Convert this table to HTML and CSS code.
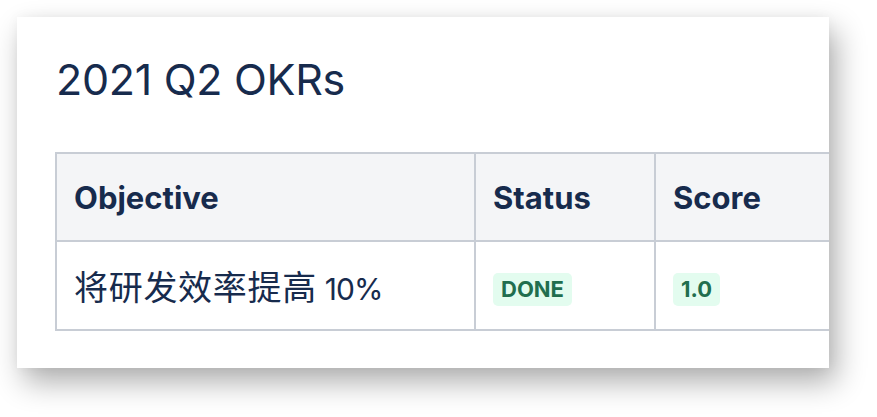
FILE: index.html
```html
<!DOCTYPE html>
<html lang="zh-CN">
<head>
<meta charset="utf-8">
<link rel="stylesheet" href="styles.css">
</head>
<body>
<div class="card">
  <h1 class="title">2021 Q2 OKRs</h1>
  <table class="okr">
    <colgroup>
      <col class="c1"><col class="c2"><col class="c3">
    </colgroup>
    <thead>
      <tr><th>Objective</th><th>Status</th><th>Score</th></tr>
    </thead>
    <tbody>
      <tr>
        <td><span class="cjk">将研发效率提高</span> <span class="num">10%</span></td>
        <td><span class="lozenge">DONE</span></td>
        <td><span class="lozenge">1.0</span></td>
      </tr>
    </tbody>
  </table>
</div>
</body>
</html>
```

FILE: styles.css
```css
html, body {
  margin: 0;
  padding: 0;
  background: #ffffff;
}
body {
  width: 877px;
  height: 417px;
  overflow: hidden;
  padding: 17px 0 0 17px;
  box-sizing: border-box;
  font-family: Inter, "Noto Sans CJK SC", sans-serif;
  color: #172b4d;
}
.card {
  width: 812px;
  height: 351px;
  background: #fff;
  overflow: hidden;
  box-sizing: border-box;
  padding: 0 0 0 38px;
  box-shadow: 7px 14px 28px rgba(0, 0, 0, 0.32), 0 0 12px rgba(0, 0, 0, 0.04);
}
.title {
  margin: 0 0 0 1px;
  padding-top: 42px;
  height: 88px;
  box-sizing: border-box;
  font-size: 43px;
  font-weight: 400;
  line-height: 40px;
  letter-spacing: -0.3px;
}
.okr {
  border-collapse: collapse;
  table-layout: fixed;
  width: 800px;
  margin-top: 47px;
}
.c1 { width: 419px; }
.c2 { width: 180px; }
.c3 { width: 201px; }
.okr th, .okr td {
  border: 2px solid #c8cdd5;
  text-align: left;
  padding: 0 0 0 17px;
  vertical-align: middle;
}
.okr th {
  background: #f4f5f7;
  height: 86px;
  font-size: 31px;
  font-weight: 700;
}
.okr td {
  height: 87px;
  font-size: 28px;
  font-weight: 400;
}
.cjk {
  font-family: "Noto Sans CJK SC", sans-serif;
  font-size: 34px;
  letter-spacing: 0.7px;
}
.num {
  font-size: 30px;
  letter-spacing: -1px;
}
.lozenge {
  display: inline-block;
  background: #e3fcef;
  color: #216e4e;
  font-size: 22px;
  font-weight: 700;
  line-height: 33px;
  padding: 0 8px;
  border-radius: 5px;
  vertical-align: -4px;
}
```
